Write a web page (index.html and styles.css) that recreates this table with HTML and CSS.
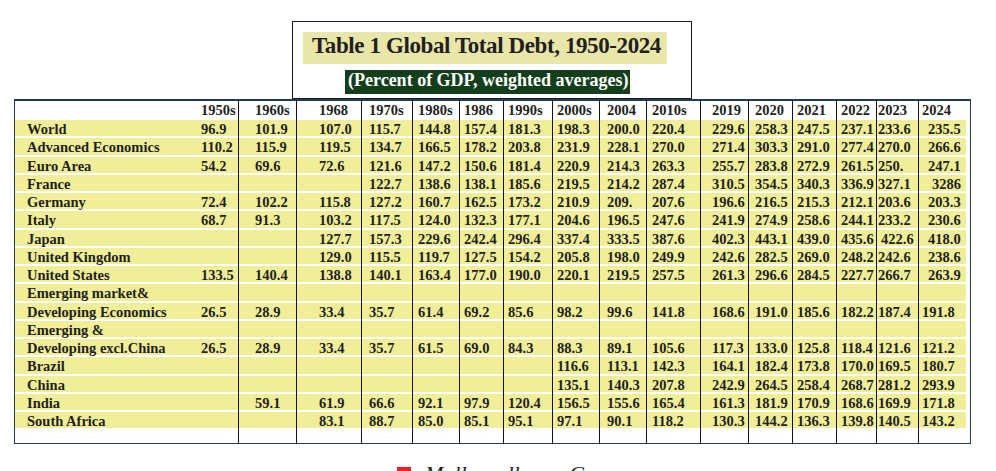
FILE: index.html
```html
<!DOCTYPE html>
<html lang="en">
<head>
<meta charset="utf-8">
<title>Table 1 Global Total Debt, 1950-2024</title>
<link rel="stylesheet" href="styles.css">
</head>
<body>
<div class="page">
  <div class="title-box">
    <h1 class="title">Table 1 Global Total Debt, 1950-2024</h1>
    <p class="subtitle">(Percent of GDP, weighted averages)</p>
  </div>
  <div class="table-frame">
    <table class="debt">
      <thead>
        <tr><th></th><th>1950s</th><th>1960s</th><th>1968</th><th>1970s</th><th>1980s</th><th>1986</th><th>1990s</th><th>2000s</th><th>2004</th><th>2010s</th><th>2019</th><th>2020</th><th>2021</th><th>2022</th><th>2023</th><th>2024</th></tr>
      </thead>
      <tbody>
        <tr><td>World</td><td>96.9</td><td>101.9</td><td>107.0</td><td>115.7</td><td>144.8</td><td>157.4</td><td>181.3</td><td>198.3</td><td>200.0</td><td>220.4</td><td>229.6</td><td>258.3</td><td>247.5</td><td>237.1</td><td>233.6</td><td class="in">235.5</td></tr>
        <tr><td>Advanced Economics</td><td>110.2</td><td>115.9</td><td>119.5</td><td>134.7</td><td>166.5</td><td>178.2</td><td>203.8</td><td>231.9</td><td>228.1</td><td>270.0</td><td>271.4</td><td>303.3</td><td>291.0</td><td>277.4</td><td>270.0</td><td class="in">266.6</td></tr>
        <tr><td>Euro Area</td><td>54.2</td><td>69.6</td><td>72.6</td><td>121.6</td><td>147.2</td><td>150.6</td><td>181.4</td><td>220.9</td><td>214.3</td><td>263.3</td><td>255.7</td><td>283.8</td><td>272.9</td><td>261.5</td><td>250.</td><td class="in">247.1</td></tr>
        <tr><td>France</td><td></td><td></td><td></td><td>122.7</td><td>138.6</td><td>138.1</td><td>185.6</td><td>219.5</td><td>214.2</td><td>287.4</td><td>310.5</td><td>354.5</td><td>340.3</td><td>336.9</td><td>327.1</td><td class="in2">3286</td></tr>
        <tr><td>Germany</td><td>72.4</td><td>102.2</td><td>115.8</td><td>127.2</td><td>160.7</td><td>162.5</td><td>173.2</td><td>210.9</td><td>209.</td><td>207.6</td><td>196.6</td><td>216.5</td><td>215.3</td><td>212.1</td><td>203.6</td><td class="in">203.3</td></tr>
        <tr><td>Italy</td><td>68.7</td><td>91.3</td><td>103.2</td><td>117.5</td><td>124.0</td><td>132.3</td><td>177.1</td><td>204.6</td><td>196.5</td><td>247.6</td><td>241.9</td><td>274.9</td><td>258.6</td><td>244.1</td><td>233.2</td><td class="in">230.6</td></tr>
        <tr><td>Japan</td><td></td><td></td><td>127.7</td><td>157.3</td><td>229.6</td><td>242.4</td><td>296.4</td><td>337.4</td><td>333.5</td><td>387.6</td><td>402.3</td><td>443.1</td><td>439.0</td><td>435.6</td><td class="in">422.6</td><td class="in">418.0</td></tr>
        <tr><td>United Kingdom</td><td></td><td></td><td>129.0</td><td>115.5</td><td>119.7</td><td>127.5</td><td>154.2</td><td>205.8</td><td>198.0</td><td>249.9</td><td>242.6</td><td>282.5</td><td>269.0</td><td>248.2</td><td>242.6</td><td class="in">238.6</td></tr>
        <tr><td>United States</td><td>133.5</td><td>140.4</td><td>138.8</td><td>140.1</td><td>163.4</td><td>177.0</td><td>190.0</td><td>220.1</td><td>219.5</td><td>257.5</td><td>261.3</td><td>296.6</td><td>284.5</td><td>227.7</td><td>266.7</td><td class="in">263.9</td></tr>
        <tr><td>Emerging market&amp;</td><td></td><td></td><td></td><td></td><td></td><td></td><td></td><td></td><td></td><td></td><td></td><td></td><td></td><td></td><td></td><td></td></tr>
        <tr><td>Developing Economics</td><td>26.5</td><td>28.9</td><td>33.4</td><td>35.7</td><td>61.4</td><td>69.2</td><td>85.6</td><td>98.2</td><td>99.6</td><td>141.8</td><td>168.6</td><td>191.0</td><td>185.6</td><td>182.2</td><td>187.4</td><td>191.8</td></tr>
        <tr><td>Emerging &amp;</td><td></td><td></td><td></td><td></td><td></td><td></td><td></td><td></td><td></td><td></td><td></td><td></td><td></td><td></td><td></td><td></td></tr>
        <tr><td>Developing excl.China</td><td>26.5</td><td>28.9</td><td>33.4</td><td>35.7</td><td>61.5</td><td>69.0</td><td>84.3</td><td>88.3</td><td>89.1</td><td>105.6</td><td>117.3</td><td>133.0</td><td>125.8</td><td>118.4</td><td>121.6</td><td>121.2</td></tr>
        <tr><td>Brazil</td><td></td><td></td><td></td><td></td><td></td><td></td><td></td><td>116.6</td><td>113.1</td><td>142.3</td><td>164.1</td><td>182.4</td><td>173.8</td><td>170.0</td><td>169.5</td><td>180.7</td></tr>
        <tr><td>China</td><td></td><td></td><td></td><td></td><td></td><td></td><td></td><td>135.1</td><td>140.3</td><td>207.8</td><td>242.9</td><td>264.5</td><td>258.4</td><td>268.7</td><td>281.2</td><td>293.9</td></tr>
        <tr><td>India</td><td></td><td>59.1</td><td>61.9</td><td>66.6</td><td>92.1</td><td>97.9</td><td>120.4</td><td>156.5</td><td>155.6</td><td>165.4</td><td>161.3</td><td>181.9</td><td>170.9</td><td>168.6</td><td>169.9</td><td>171.8</td></tr>
        <tr><td>South Africa</td><td></td><td></td><td>83.1</td><td>88.7</td><td>85.0</td><td>85.1</td><td>95.1</td><td>97.1</td><td>90.1</td><td>118.2</td><td>130.3</td><td>144.2</td><td>136.3</td><td>139.8</td><td>140.5</td><td>143.2</td></tr>
        <tr class="blank"><td></td><td></td><td></td><td></td><td></td><td></td><td></td><td></td><td></td><td></td><td></td><td></td><td></td><td></td><td></td><td></td><td></td></tr>
      </tbody>
    </table>
  </div>
  <div class="caption">
    <span class="marker"></span>
    <span class="caption-text">Mullow ellower Gauss</span>
  </div>
</div>
</body>
</html>
```

FILE: styles.css
```css
html, body {
  margin: 0;
  padding: 0;
  background: #ffffff;
  height: 471px;
  overflow: hidden;
}

.page {
  font-family: "Liberation Serif", "Times New Roman", serif;
  color: #231f20;
  padding-top: 21px;
}

.title-box {
  box-sizing: border-box;
  width: 400px;
  height: 78px;
  margin-left: 292px;
  border: 1px solid #1d1d1d;
  display: flex;
  flex-direction: column;
  align-items: flex-start;
}

.title {
  margin: 10px 0 0 10px;
  padding: 0 6px 4px 9px;
  height: 28px;
  line-height: 28px;
  font-size: 23px;
  letter-spacing: -0.4px;
  font-weight: bold;
  background: #e9e6a9;
  white-space: nowrap;
}

.subtitle {
  margin: 6px 0 0 52px;
  padding: 0 2px 4px 3px;
  height: 20px;
  line-height: 20px;
  font-size: 18px;
  font-weight: bold;
  color: #ffffff;
  background: #143e1b;
  white-space: nowrap;
}

.table-frame {
  box-sizing: border-box;
  width: 957px;
  margin-left: 14px;
  border: 1px solid #1f3a52;
  border-top-width: 2px;
  padding-right: 4px;
}

.debt {
  border-collapse: separate;
  border-spacing: 0;
  table-layout: fixed;
  width: 951px;
  font-size: 14.5px;
  font-weight: bold;
}

.debt th,
.debt td {
  box-sizing: border-box;
  padding: 0;
  text-align: left;
  white-space: nowrap;
  overflow: visible;
  vertical-align: top;
  font-weight: bold;
}

.debt th {
  height: 19px;
  line-height: 19px;
  background: #ffffff;
}

.debt td {
  height: 18.25px;
  line-height: 18.25px;
  background: linear-gradient(to bottom, #f0ee98 calc(100% - 2px), #ffffff calc(100% - 2px));
}

.debt tr.blank td {
  height: 12.5px;
  background: #ffffff;
}

.debt th:nth-child(n+3),
.debt td:nth-child(n+3) {
  border-left: 1px solid #141414;
}

/* column widths and text insets */
.debt th:nth-child(1) { width: 175px; }
.debt td:nth-child(1) { padding-left: 12px; }
.debt th:nth-child(2) { width: 48px; }
.debt th:nth-child(2), .debt td:nth-child(2) { padding-left: 11px; }
.debt th:nth-child(3) { width: 58px; }
.debt th:nth-child(3), .debt td:nth-child(3) { padding-left: 16px; }
.debt th:nth-child(4) { width: 65px; }
.debt th:nth-child(4), .debt td:nth-child(4) { padding-left: 22px; }
.debt th:nth-child(5) { width: 51px; }
.debt th:nth-child(5), .debt td:nth-child(5) { padding-left: 7px; }
.debt th:nth-child(6) { width: 47px; }
.debt th:nth-child(6), .debt td:nth-child(6) { padding-left: 5px; }
.debt th:nth-child(7) { width: 44px; }
.debt th:nth-child(7), .debt td:nth-child(7) { padding-left: 4px; }
.debt th:nth-child(8) { width: 49px; }
.debt th:nth-child(8), .debt td:nth-child(8) { padding-left: 4px; }
.debt th:nth-child(9) { width: 47px; }
.debt th:nth-child(9), .debt td:nth-child(9) { padding-left: 4px; }
.debt th:nth-child(10) { width: 47px; }
.debt th:nth-child(10), .debt td:nth-child(10) { padding-left: 7px; }
.debt th:nth-child(11) { width: 54px; }
.debt th:nth-child(11), .debt td:nth-child(11) { padding-left: 5px; }
.debt th:nth-child(12) { width: 48px; }
.debt th:nth-child(12), .debt td:nth-child(12) { padding-left: 11px; }
.debt th:nth-child(13) { width: 44px; }
.debt th:nth-child(13), .debt td:nth-child(13) { padding-left: 6px; }
.debt th:nth-child(14) { width: 44px; }
.debt th:nth-child(14), .debt td:nth-child(14) { padding-left: 4px; }
.debt th:nth-child(15) { width: 40px; }
.debt th:nth-child(15), .debt td:nth-child(15) { padding-left: 4px; }
.debt th:nth-child(16) { width: 42px; }
.debt th:nth-child(16), .debt td:nth-child(16) { padding-left: 1px; }
.debt th:nth-child(17) { width: 48px; }
.debt th:nth-child(17), .debt td:nth-child(17) { padding-left: 3px; }

.debt td.in { padding-left: 9px; }
.debt td:nth-child(16).in { padding-left: 4px; }
.debt td.in2 { padding-left: 13px; }

.caption {
  display: flex;
  align-items: flex-start;
  gap: 14px;
  margin: 19px 0 0 397px;
}

.marker {
  width: 14px;
  height: 14px;
  margin-top: 4px;
  background: #e8202a;
  flex: none;
}

.caption-text {
  font-style: italic;
  font-size: 22px;
  line-height: 22px;
  white-space: nowrap;
}
```
